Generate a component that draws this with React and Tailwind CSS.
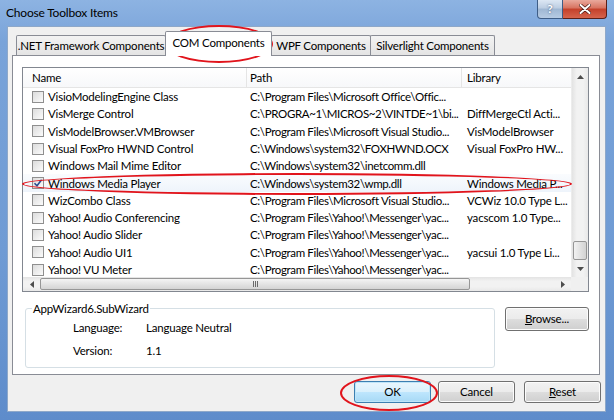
import React from "react";

const rows = [
  ["VisioModelingEngine Class", "C:\\Program Files\\Microsoft Office\\Offic...", ""],
  ["VisMerge Control", "C:\\PROGRA~1\\MICROS~2\\VINTDE~1\\bi...", "DiffMergeCtl Acti..."],
  ["VisModelBrowser.VMBrowser", "C:\\Program Files\\Microsoft Visual Studio...", "VisModelBrowser"],
  ["Visual FoxPro HWND Control", "C:\\Windows\\system32\\FOXHWND.OCX", "Visual FoxPro HW..."],
  ["Windows Mail Mime Editor", "C:\\Windows\\system32\\inetcomm.dll", ""],
  ["Windows Media Player", "C:\\Windows\\system32\\wmp.dll", "Windows Media P...", true],
  ["WizCombo Class", "C:\\Program Files\\Microsoft Visual Studio...", "VCWiz 10.0 Type L..."],
  ["Yahoo! Audio Conferencing", "C:\\Program Files\\Yahoo!\\Messenger\\yac...", "yacscom 1.0 Type..."],
  ["Yahoo! Audio Slider", "C:\\Program Files\\Yahoo!\\Messenger\\yac...", ""],
  ["Yahoo! Audio UI1", "C:\\Program Files\\Yahoo!\\Messenger\\yac...", "yacsui 1.0 Type Li..."],
  ["Yahoo! VU Meter", "C:\\Program Files\\Yahoo!\\Messenger\\yac...", ""],
];

function Checkbox({ checked }) {
  return (
    <div className="w-[12px] h-[12px] shrink-0 border border-[#8f8f8f] bg-[linear-gradient(135deg,#dcdcdc,#fbfbfb)] flex items-center justify-center">
      {checked && (
        <svg width="10" height="10" viewBox="0 0 10 10">
          <path d="M1.5 5.2 L4 7.8 L8.6 1.8" fill="none" stroke="#2a4d8f" strokeWidth="1.6" />
        </svg>
      )}
    </div>
  );
}

function Tab({ children, w, selected }) {
  if (selected) {
    return (
      <div
        className={`${w} h-[25px] -mb-[1px] relative z-10 bg-white border border-b-0 border-[#898c95] rounded-t-[2px] flex items-center justify-center pb-[2px] whitespace-nowrap`}
      >
        {children}
      </div>
    );
  }
  return (
    <div
      className={`${w} h-[20px] bg-[linear-gradient(180deg,#f3f3f3,#e4e4e4)] border border-b-0 border-[#898c95] rounded-t-[2px] flex items-center justify-center whitespace-nowrap`}
    >
      {children}
    </div>
  );
}

function Btn({ children, def }) {
  return (
    <div
      className={`w-[77px] h-[22px] rounded-[3px] border flex items-center justify-center ${
        def
          ? "border-[#3c7fb1] bg-[linear-gradient(180deg,#eaf6fd_0%,#d9f0fc_50%,#bee6fd_51%,#a7d9f5_100%)] shadow-[inset_0_0_0_1px_#bfe5f8]"
          : "border-[#707070] bg-[linear-gradient(180deg,#f2f2f2_0%,#ebebeb_50%,#dddddd_51%,#cfcfcf_100%)] shadow-[inset_0_0_0_1px_#fcfcfc]"
      }`}
    >
      {children}
    </div>
  );
}

function Tri({ dir }) {
  const d = {
    up: "M0 4 L3.5 0 L7 4 Z",
    down: "M0 0 L7 0 L3.5 4 Z",
    left: "M4 0 L4 7 L0 3.5 Z",
    right: "M0 0 L4 3.5 L0 7 Z",
  }[dir];
  const vert = dir === "up" || dir === "down";
  return (
    <svg width={vert ? 7 : 4} height={vert ? 4 : 7} viewBox={vert ? "0 0 7 4" : "0 0 4 7"}>
      <path d={d} fill="#4d4d4d" />
    </svg>
  );
}

export default function App() {
  return (
    <div className="relative w-[614px] h-[420px] overflow-hidden flex flex-col font-['Segoe_UI',Lato,sans-serif] text-[11.5px] tracking-[-0.2px] text-black bg-[linear-gradient(180deg,#8db3e2_0%,#79a3d9_10%,#6f9bd4_60%,#5e8ccb_100%)]">
      {/* title bar */}
      <div className="h-[26px] shrink-0 flex items-start">
        <div className="pl-[6px] pt-[4px] text-[12px] text-black">Choose Toolbox Items</div>
        <div className="ml-auto mr-[7px] flex">
          <div className="w-[26px] h-[19px] rounded-bl-[4px] border border-t-0 border-[#3e5d86] bg-[linear-gradient(180deg,#dce7f4_0%,#bccde2_45%,#9fb7d3_50%,#b6cbe3_100%)] flex items-center justify-center text-white text-[12px] font-bold [text-shadow:0_0_2px_#33496b]">
            ?
          </div>
          <div className="w-[44px] h-[19px] rounded-br-[4px] border border-t-0 border-l-0 border-[#5a1f18] bg-[linear-gradient(180deg,#e9a99c_0%,#d7725f_45%,#c4402a_50%,#d6644c_100%)] flex items-center justify-center">
            <svg width="12" height="10" viewBox="0 0 12 10">
              <path d="M1.5 1 L10.5 9 M10.5 1 L1.5 9" stroke="#4a1a14" strokeWidth="3.4" strokeLinecap="round" />
              <path d="M1.5 1 L10.5 9 M10.5 1 L1.5 9" stroke="#ffffff" strokeWidth="2" strokeLinecap="round" />
            </svg>
          </div>
        </div>
      </div>

      {/* client area */}
      <div className="ml-[7px] mr-[8px] h-[386px] shrink-0 bg-[#f0f0f0] border border-[#8ea8c9] flex flex-col">
        {/* tabs */}
        <div className="mt-[4px] ml-[8px] h-[24px] flex items-end">
          <Tab w="w-[150px]">.NET Framework Components</Tab>
          <Tab w="w-[107px] -ml-[1px]" selected>
            COM Components
          </Tab>
          <Tab w="w-[100px] -ml-[1px]">WPF Components</Tab>
          <Tab w="w-[125px] -ml-[1px]">Silverlight Components</Tab>
        </div>
        {/* panel */}
        <div className="ml-[4px] w-[588px] h-[320px] bg-white border border-[#898c95] flex flex-col">
          {/* list view */}
          <div className="ml-[9px] mt-[11px] w-[567px] h-[225px] border border-[#828790] flex flex-col">
            <div className="flex-1 flex min-h-0">
              <div className="flex-1 flex flex-col min-w-0 overflow-hidden">
                {/* header */}
                <div className="h-[20px] shrink-0 flex border-b border-[#e5e5e5] bg-[linear-gradient(180deg,#ffffff,#f7f8fa)]">
                  <div className="w-[224px] shrink-0 pl-[9px] flex items-center border-r border-[#e5e5e5]">Name</div>
                  <div className="w-[215px] shrink-0 pl-[3px] flex items-center border-r border-[#e5e5e5]">Path</div>
                  <div className="w-[140px] shrink-0 pl-[5px] flex items-center">Library</div>
                </div>
                {/* rows */}
                <div className="flex-1 overflow-hidden">
                  {rows.map(([n, p, l, c]) => (
                    <div
                      key={n}
                      className={`h-[17.3px] flex items-center whitespace-nowrap ${
                        c ? "bg-[linear-gradient(180deg,#fafcfe,#eef4fb)]" : ""
                      }`}
                    >
                      <div className="w-[224px] shrink-0 pl-[9px] flex items-center gap-[4px] overflow-hidden">
                        <Checkbox checked={c} />
                        <span>{n}</span>
                      </div>
                      <div className="w-[215px] shrink-0 pl-[3px] overflow-hidden tracking-[-0.35px]">{p}</div>
                      <div className="w-[140px] shrink-0 pl-[5px] overflow-hidden">{l}</div>
                    </div>
                  ))}
                </div>
              </div>
              {/* vertical scrollbar */}
              <div className="w-[17px] shrink-0 flex flex-col bg-[linear-gradient(90deg,#e3e3e3,#f2f2f2_30%,#f2f2f2_70%,#e8e8e8)] border-l border-[#ececec]">
                <div className="h-[17px] flex items-center justify-center">
                  <Tri dir="up" />
                </div>
                <div className="flex-1" />
                <div className="h-[19px] mx-[1px] rounded-[2px] border border-[#969696] bg-[linear-gradient(90deg,#f2f2f2,#e2e2e2_50%,#d2d2d2)]" />
                <div className="h-[17px] flex items-center justify-center">
                  <Tri dir="down" />
                </div>
              </div>
            </div>
            {/* horizontal scrollbar */}
            <div className="h-[14px] shrink-0 flex">
              <div className="flex-1 flex items-stretch bg-[linear-gradient(180deg,#e3e3e3,#f2f2f2_30%,#f2f2f2_70%,#e8e8e8)]">
                <div className="w-[17px] flex items-center justify-center">
                  <Tri dir="left" />
                </div>
                <div className="w-[430px] my-[1px] rounded-[2px] border border-[#969696] bg-[linear-gradient(180deg,#f4f4f4,#e4e4e4_50%,#d4d4d4)] flex items-center justify-center">
                  <div className="flex gap-[1px]">
                    <div className="w-[1px] h-[6px] bg-[#6a6a6a]" />
                    <div className="w-[1px] h-[6px] bg-[#6a6a6a]" />
                    <div className="w-[1px] h-[6px] bg-[#6a6a6a]" />
                  </div>
                </div>
                <div className="flex-1" />
                <div className="w-[17px] flex items-center justify-center">
                  <Tri dir="right" />
                </div>
              </div>
              <div className="w-[17px] bg-[#f0f0f0]" />
            </div>
          </div>

          {/* group + browse */}
          <div className="mt-[8px] flex items-start">
            <fieldset className="ml-[12px] w-[470px] h-[68px] border border-[#d5dfe5] rounded-[3px]">
              <legend className="ml-[6px] px-[1px]">AppWizard6.SubWizard</legend>
              <div className="pl-[47px] flex h-[18px] items-center mt-[1px]">
                <div className="w-[73px]">Language:</div>
                <div>Language Neutral</div>
              </div>
              <div className="pl-[47px] flex h-[18px] items-center mt-[5px]">
                <div className="w-[73px]">Version:</div>
                <div>1.1</div>
              </div>
            </fieldset>
            <div className="ml-[10px] mt-[7px]">
              <div className="w-[84px] h-[24px] rounded-[3px] border border-[#707070] bg-[linear-gradient(180deg,#f2f2f2_0%,#ebebeb_50%,#dddddd_51%,#cfcfcf_100%)] shadow-[inset_0_0_0_1px_#fcfcfc] flex items-center justify-center">
                <span>
                  <span className="underline">B</span>rowse...
                </span>
              </div>
            </div>
          </div>
        </div>

        {/* bottom buttons */}
        <div className="mt-[6px] pr-[4px] flex justify-end gap-[7px]">
          <Btn def>OK</Btn>
          <Btn>Cancel</Btn>
          <div className="ml-[2px]">
            <Btn>
              <span>
                <span className="underline">R</span>eset
              </span>
            </Btn>
          </div>
        </div>
      </div>

      {/* red annotation ellipses */}
      <div className="absolute left-[165px] top-[25px] w-[108px] h-[38px] rounded-[50%] border-[2.5px] border-[#e1141c]" />
      <div className="absolute left-[22px] top-[173px] w-[550px] h-[22px] rounded-[50%] border-[2.5px] border-[#e1141c]" />
      <div className="absolute left-[340px] top-[375px] w-[98px] h-[36px] rounded-[50%] border-[2.5px] border-[#e1141c]" />
    </div>
  );
}
